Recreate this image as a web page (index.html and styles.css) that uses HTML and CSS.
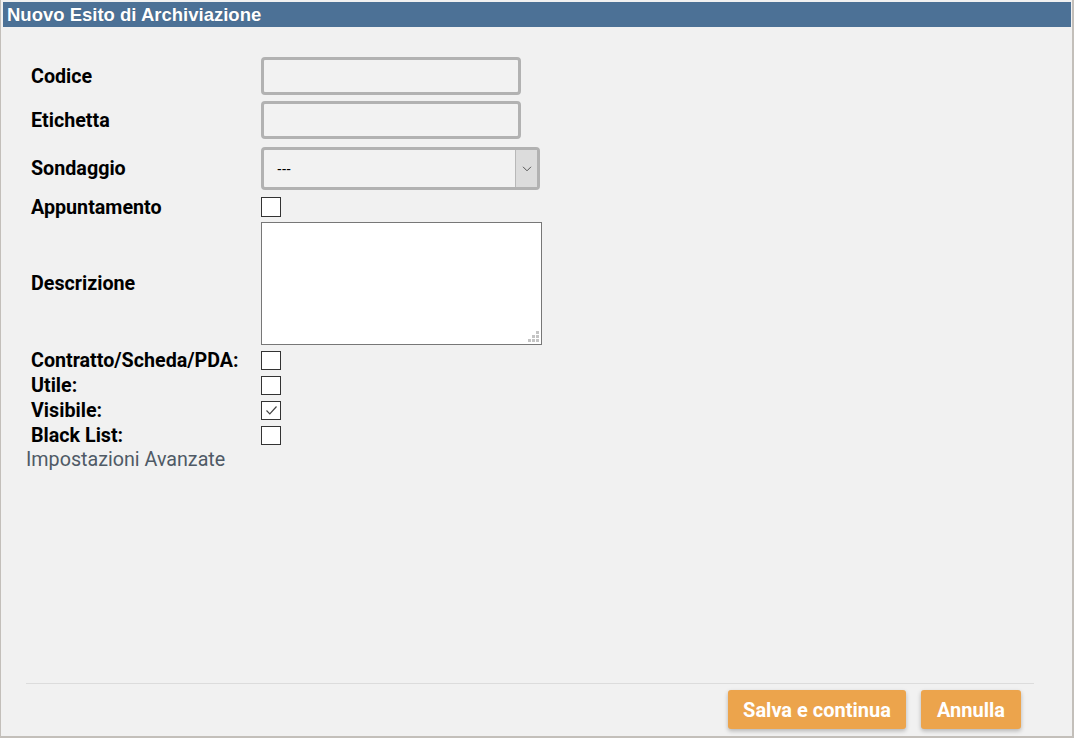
FILE: index.html
```html
<!DOCTYPE html>
<html lang="it">
<head>
<meta charset="utf-8">
<title>Nuovo Esito di Archiviazione</title>
<link rel="stylesheet" href="styles.css">
</head>
<body>
<div class="window">
  <div class="titlebar">Nuovo Esito di Archiviazione</div>
  <div class="content">
    <form class="form">
      <div class="row r-codice">
        <label class="lbl">Codice</label>
        <input class="txt" type="text">
      </div>
      <div class="row r-etichetta">
        <label class="lbl">Etichetta</label>
        <input class="txt" type="text">
      </div>
      <div class="row r-sondaggio">
        <label class="lbl">Sondaggio</label>
        <div class="select">
          <span class="select-val">---</span>
          <span class="select-arrow">
            <svg width="10" height="6" viewBox="0 0 10 6"><path d="M1 0.8 L5 4.8 L9 0.8" fill="none" stroke="#555" stroke-width="1"/></svg>
          </span>
        </div>
      </div>
      <div class="row r-appunt">
        <label class="lbl">Appuntamento</label>
        <span class="box big"></span>
      </div>
      <div class="row r-descr">
        <label class="lbl">Descrizione</label>
        <div class="area">
          <svg class="grip" width="11" height="11" viewBox="0 0 11 11">
            <rect x="8" y="0" width="3" height="3" fill="#c4c4c4"/>
            <rect x="4" y="4" width="3" height="3" fill="#c4c4c4"/>
            <rect x="8" y="4" width="3" height="3" fill="#c4c4c4"/>
            <rect x="0" y="8" width="3" height="3" fill="#c4c4c4"/>
            <rect x="4" y="8" width="3" height="3" fill="#c4c4c4"/>
            <rect x="8" y="8" width="3" height="3" fill="#c4c4c4"/>
          </svg>
        </div>
      </div>
      <div class="row r-small first">
        <label class="lbl">Contratto/Scheda/PDA:</label>
        <span class="box"></span>
      </div>
      <div class="row r-small">
        <label class="lbl">Utile:</label>
        <span class="box"></span>
      </div>
      <div class="row r-small">
        <label class="lbl">Visibile:</label>
        <span class="box checked">
          <svg width="13" height="11" viewBox="0 0 13 11"><path d="M1.5 5.5 L4.8 8.8 L11.5 1.5" fill="none" stroke="#444" stroke-width="1.2"/></svg>
        </span>
      </div>
      <div class="row r-small">
        <label class="lbl">Black List:</label>
        <span class="box"></span>
      </div>
      <div class="advanced">Impostazioni Avanzate</div>
    </form>
    <div class="footer">
      <button class="btn btn-save" type="button">Salva e continua</button>
      <button class="btn btn-cancel" type="button">Annulla</button>
    </div>
  </div>
</div>
</body>
</html>
```

FILE: styles.css
```css
html, body {
  margin: 0;
  padding: 0;
  background: #f1f1f1;
}
.window {
  box-sizing: border-box;
  width: 1074px;
  height: 738px;
  border-left: 1px solid #c3bfba;
  border-right: 2px solid #c3bfba;
  border-bottom: 2px solid #c3bfba;
  padding: 2px 1px 0 2px;
  display: flex;
  flex-direction: column;
  background: #f1f1f1;
}
.titlebar {
  height: 25px;
  background: #4c7196;
  color: #fff;
  font-family: "Liberation Sans", Arial, sans-serif;
  font-weight: bold;
  font-size: 18.5px;
  line-height: 25px;
  padding-left: 4px;
  text-shadow: 0 0 1px rgba(0,0,0,0.25);
}
.content {
  flex: 1;
  display: flex;
  flex-direction: column;
}
.form {
  padding: 30px 0 0 28px;
  margin: 0;
  font-family: Roboto, "Liberation Sans", sans-serif;
}
.row {
  display: flex;
  align-items: center;
}
.lbl {
  width: 230px;
  flex: none;
  font-weight: bold;
  font-size: 19.7px;
  line-height: 19px;
  color: #000;
}
.txt {
  box-sizing: border-box;
  width: 260px;
  height: 38px;
  border: 3px solid #b2b2b2;
  border-radius: 4px;
  background: #f2f2f2;
  margin: 0;
  padding: 0 10px;
  outline: none;
}
.r-etichetta { margin-top: 6px; }
.r-sondaggio { margin-top: 8px; }
.select {
  box-sizing: border-box;
  width: 279px;
  height: 43px;
  border: 3px solid #b2b2b2;
  border-radius: 4px;
  background: #f2f2f2;
  display: flex;
  align-items: stretch;
}
.select-val {
  flex: 1;
  display: flex;
  align-items: center;
  padding-left: 13px;
  font-family: "Liberation Sans", Arial, sans-serif;
  font-size: 14px;
  color: #000;
}
.select-arrow {
  width: 21px;
  background: #dcdcdc;
  border-left: 1px solid #b8b8b8;
  display: flex;
  align-items: center;
  justify-content: center;
}
.r-appunt { margin-top: 7px; height: 20px; }
.box {
  box-sizing: border-box;
  width: 20px;
  height: 19px;
  border: 1px solid #333;
  background: #fff;
  display: flex;
  align-items: center;
  justify-content: center;
}
.box.big { height: 20px; }
.r-descr { margin-top: 5px; }
.area {
  position: relative;
  box-sizing: border-box;
  width: 281px;
  height: 123px;
  border: 1px solid #777;
  background: #fff;
}
.grip {
  position: absolute;
  right: 2px;
  bottom: 2px;
}
.r-small { margin-top: 6px; height: 19px; }
.advanced {
  margin: 3px 0 0 -5px;
  font-size: 19.7px;
  line-height: 24px;
  color: #4f5a66;
  font-family: Roboto, "Liberation Sans", sans-serif;
}
.footer {
  margin: auto 37px 0 23px;
  border-top: 1px solid #dcdcdc;
  display: flex;
  justify-content: flex-end;
  gap: 15px;
  padding: 6px 13px 7px 0;
}
.btn {
  height: 39px;
  border: none;
  border-radius: 3px;
  background: #eca44c;
  color: #fff;
  font-family: Roboto, "Liberation Sans", sans-serif;
  font-weight: bold;
  font-size: 20px;
  padding: 0;
  box-shadow: 0 2px 4px rgba(0,0,0,0.25);
}
.btn-save { width: 178px; }
.btn-cancel { width: 100px; }
```
